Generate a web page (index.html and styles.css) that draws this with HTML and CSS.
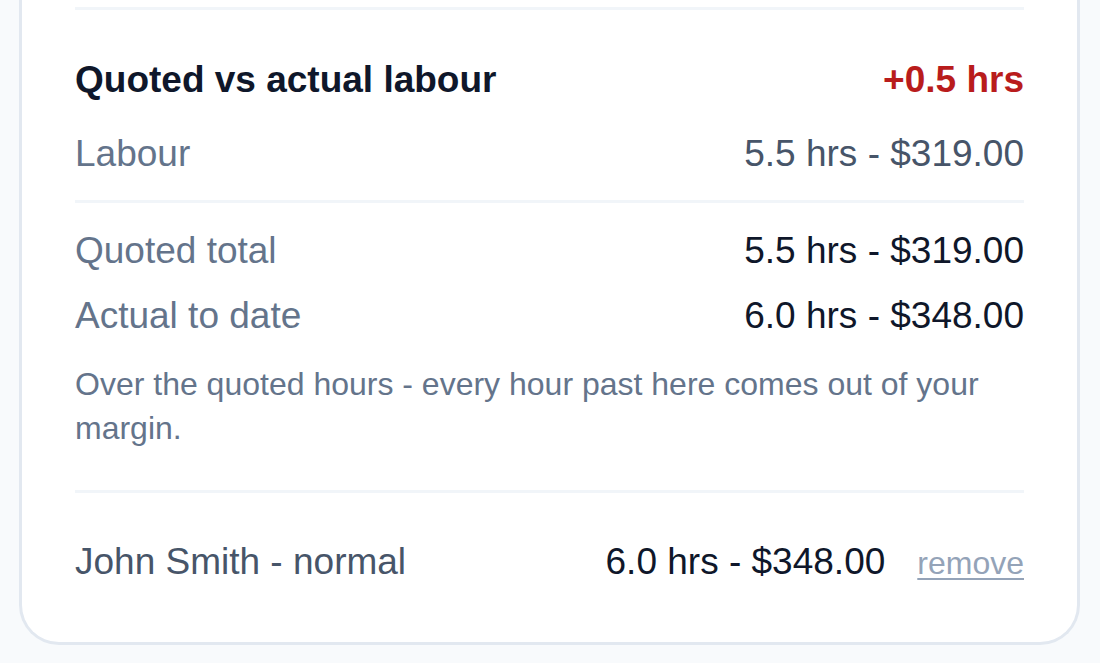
FILE: index.html
```html
<!DOCTYPE html>
<html>
	<head>
		<meta charset="UTF-8">
		<title>Job labour</title>
		<link rel="stylesheet" href="styles.css">
	</head>
	<body>
		<div class="card">
			<section class="labour">
				<div class="labour_head">
					<h2>Quoted vs actual labour</h2>
					<span class="over">+0.5 hrs</span>
				</div>
				<div class="row quoted_line">
					<span class="label">Labour</span>
					<span class="val soft">5.5 hrs - $319.00</span>
				</div>

				<div class="totals">
					<div class="row">
						<span class="label">Quoted total</span>
						<span class="val">5.5 hrs - $319.00</span>
					</div>
					<div class="row row_actual">
						<span class="label">Actual to date</span>
						<span class="val">6.0 hrs - $348.00</span>
					</div>
					<p class="note">Over the quoted hours - every hour past here comes out of your margin.</p>
				</div>

				<div class="entries">
					<div class="row entry">
						<span class="who">John Smith - normal</span>
						<span class="entry_right">
							<span class="val">6.0 hrs - $348.00</span>
							<a class="remove" href="#">remove</a>
						</span>
					</div>
				</div>
			</section>
		</div>
	</body>
</html>
```

FILE: styles.css
```css
body{margin: 0; background: #f8fafc; font-family: "Liberation Sans", Arial, Helvetica, sans-serif; color: #0f172a;}
h2, p{margin: 0;}

.card{margin: 0 20px 0 19px; padding: 7px 53px 55px; background: #fff; border: 3px solid #e2e8f0; border-top: 0;
	border-radius: 0 0 40px 40px;}

.labour{border-top: 3px solid #f1f5f9;}
.labour_head{display: flex; justify-content: space-between; align-items: baseline; padding-top: 46px;
	font-size: 37px; line-height: 48px;}
.labour_head h2{font-size: 37px; font-weight: bold; color: #0f172a;}
.labour_head .over{font-weight: bold; color: #b91c1c;}

.row{display: flex; justify-content: space-between; align-items: baseline; font-size: 37px; line-height: 48px;}
.label{color: #64748b;}
.val{color: #0f172a;}
.val.soft{color: #475569;}
.quoted_line{margin-top: 26px; padding-bottom: 22px;}

.totals{border-top: 3px solid #f1f5f9; padding: 24px 0 40px;}
.row_actual{margin-top: 17px;}
.note{margin-top: 22px; font-size: 32px; line-height: 44px; color: #64748b;}

.entries{border-top: 3px solid #f1f5f9; padding-top: 45px;}
.who{color: #475569;}
.entry_right{display: flex; align-items: baseline; gap: 32px;}
.remove{font-size: 32px; color: #94a3b8; text-decoration: underline; text-decoration-thickness: 2px;
	text-underline-offset: 4px;}
```
